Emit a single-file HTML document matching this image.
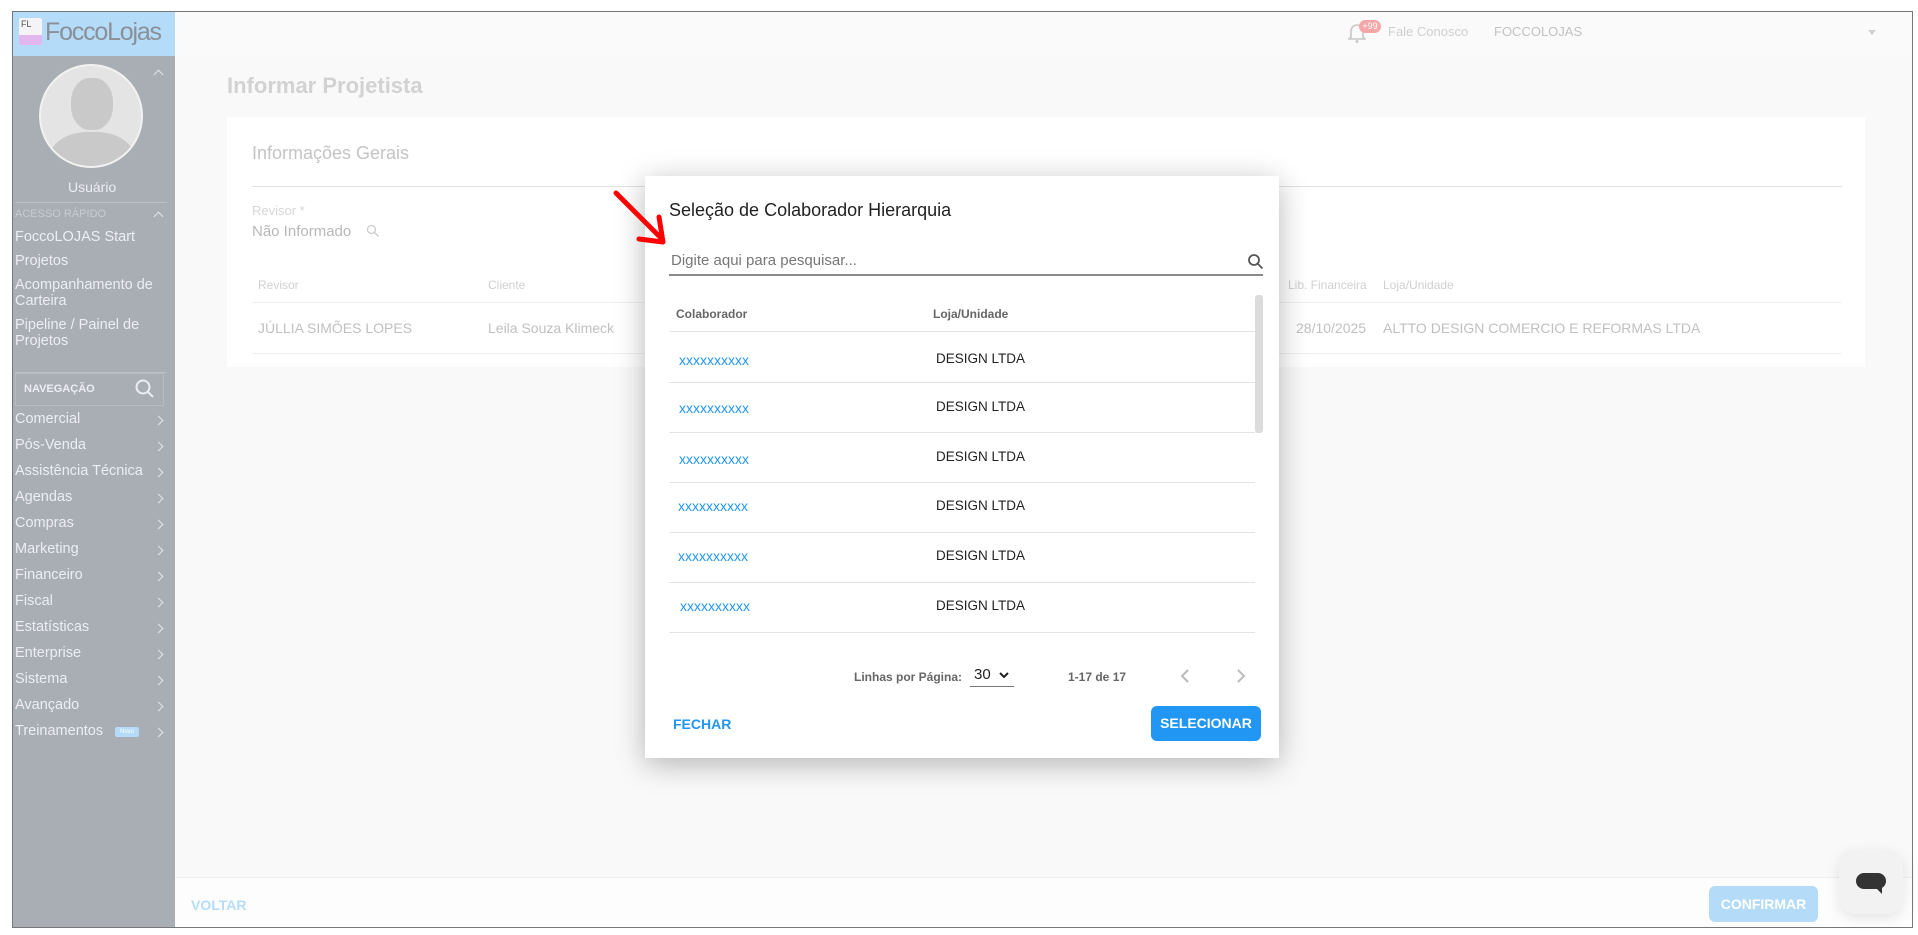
<!DOCTYPE html>
<html><head><meta charset="utf-8"><style>
*{margin:0;padding:0;box-sizing:border-box}
body{width:1918px;height:935px;background:#fff;position:relative;overflow:hidden;font-family:"Liberation Sans","DejaVu Sans",sans-serif}
.a{position:absolute;white-space:nowrap}
#frame{position:absolute;left:12px;top:11px;width:1901px;height:917px;border:1px solid #777;background:#f9f9f9;overflow:hidden}
.side{color:#eceef2;font-size:14.5px}
.chev{position:absolute;left:155px;width:7px;height:7px;border-right:1.5px solid #e4e6ea;border-top:1.5px solid #e4e6ea;transform:rotate(45deg)}
.row{position:absolute;left:669px;width:586px;height:1px;background:#e3e3e3}
.x{color:#2196f3;font-size:14px;text-decoration:none}
.d{color:#222;font-size:13.5px}
</style></head><body>
<div id="frame"></div>
<!-- sidebar -->
<div class="a" style="left:13px;top:12px;width:162px;height:44px;background:#b4dcf9"></div>
<div class="a" style="left:19px;top:18px;width:23px;height:27px;background:#f4f4f6;border-radius:2px"></div>
<div class="a" style="left:19px;top:35px;width:23px;height:10px;background:#e2b6ef;border-radius:0 0 2px 2px"></div>
<div class="a" style="left:21px;top:19px;font-size:9px;color:#555">FL</div>
<div class="a" style="left:45px;top:18px;font-size:25px;color:#8a8f98;letter-spacing:-1.2px">FoccoLojas</div>
<div class="a" style="left:13px;top:56px;width:162px;height:871px;background:#a9adb4"></div>
<div class="a" style="left:39px;top:64px;width:104px;height:104px;border-radius:50%;background:#e4e4e4;border:2px solid #f2f2f2;overflow:hidden">
<div style="position:absolute;left:30px;top:12px;width:42px;height:52px;border-radius:45%;background:#c9c9c9"></div>
<div style="position:absolute;left:8px;top:66px;width:86px;height:60px;border-radius:45% 45% 0 0;background:#c9c9c9"></div>
</div>
<div class="chev" style="top:71px;transform:rotate(-45deg)"></div>
<div class="a side" style="left:68px;top:179px;font-size:14px">Usuário</div>
<div class="a" style="left:15px;top:202px;width:152px;height:1px;background:#bcc0c6"></div>
<div class="a side" style="left:15px;top:208px;font-size:11px;color:#c8cbd0">ACESSO RÁPIDO</div>
<div class="chev" style="top:213px;transform:rotate(-45deg)"></div>
<div class="a side" style="left:15px;top:229px">FoccoLOJAS Start</div>
<div class="a side" style="left:15px;top:253px">Projetos</div>
<div class="a side" style="left:15px;top:277px;line-height:16px">Acompanhamento de<br>Carteira</div>
<div class="a side" style="left:15px;top:317px;line-height:16px">Pipeline / Painel de<br>Projetos</div>
<div class="a" style="left:15px;top:372px;width:152px;height:1px;background:#bcc0c6"></div>
<div class="a" style="left:15px;top:373px;width:149px;height:33px;border:1px solid #b8bcc2"></div>
<div class="a side" style="left:24px;top:383px;font-size:11px;font-weight:bold">NAVEGAÇÃO</div>
<svg class="a" style="left:134px;top:378px" width="22" height="22" viewBox="0 0 22 22"><circle cx="9" cy="9" r="6.5" fill="none" stroke="#eceef2" stroke-width="2"/><path d="M14 14l5 5" stroke="#eceef2" stroke-width="2"/></svg>
<div class="a side" style="left:15px;top:411px">Comercial</div><div class="chev" style="top:417px"></div>
<div class="a side" style="left:15px;top:437px">Pós-Venda</div><div class="chev" style="top:443px"></div>
<div class="a side" style="left:15px;top:463px">Assistência Técnica</div><div class="chev" style="top:469px"></div>
<div class="a side" style="left:15px;top:489px">Agendas</div><div class="chev" style="top:495px"></div>
<div class="a side" style="left:15px;top:515px">Compras</div><div class="chev" style="top:521px"></div>
<div class="a side" style="left:15px;top:541px">Marketing</div><div class="chev" style="top:547px"></div>
<div class="a side" style="left:15px;top:567px">Financeiro</div><div class="chev" style="top:573px"></div>
<div class="a side" style="left:15px;top:593px">Fiscal</div><div class="chev" style="top:599px"></div>
<div class="a side" style="left:15px;top:619px">Estatísticas</div><div class="chev" style="top:625px"></div>
<div class="a side" style="left:15px;top:645px">Enterprise</div><div class="chev" style="top:651px"></div>
<div class="a side" style="left:15px;top:671px">Sistema</div><div class="chev" style="top:677px"></div>
<div class="a side" style="left:15px;top:697px">Avançado</div><div class="chev" style="top:703px"></div>
<div class="a side" style="left:15px;top:723px">Treinamentos</div><div class="a" style="left:115px;top:727px;width:24px;height:10px;background:#b4dcf9;border-radius:2px;font-size:6px;color:#fff;text-align:center;line-height:10px">Novo</div><div class="chev" style="top:729px"></div>
<!-- header -->
<div class="a" style="left:175px;top:12px;width:1737px;height:44px;background:#fafafa"></div>
<svg class="a" style="left:1348px;top:22px" width="18" height="22" viewBox="0 0 18 22"><path d="M3 15V9a6 6 0 0112 0v6l2 2H1z" fill="none" stroke="#c8c8c8" stroke-width="1.6"/><circle cx="9" cy="19.5" r="1.5" fill="#c8c8c8"/></svg>
<div class="a" style="left:1359px;top:20px;width:22px;height:13px;border-radius:7px;background:#f5a6a6;color:#fff;font-size:9px;text-align:center;line-height:13px">+99</div>
<div class="a" style="left:1388px;top:24px;font-size:13px;color:#cfcfcf">Fale Conosco</div>
<div class="a" style="left:1494px;top:24px;font-size:13px;color:#c2c2c2">FOCCOLOJAS</div>
<div class="a" style="left:1868px;top:30px;border-left:4px solid transparent;border-right:4px solid transparent;border-top:5px solid #d0d0d0"></div>
<!-- page -->
<div class="a" style="left:227px;top:73px;font-size:22px;color:#d2d2d2;font-weight:bold">Informar Projetista</div>
<div class="a" style="left:227px;top:117px;width:1638px;height:250px;background:#fff"></div>
<div class="a" style="left:252px;top:143px;font-size:18px;color:#c4c4c4">Informações Gerais</div>
<div class="a" style="left:252px;top:186px;width:1590px;height:1px;background:#e2e2e2"></div>
<div class="a" style="left:252px;top:203px;font-size:13px;color:#d6d6d6">Revisor *</div>
<div class="a" style="left:252px;top:223px;font-size:15px;color:#b8b8b8">Não Informado</div>
<svg class="a" style="left:366px;top:224px" width="14" height="14" viewBox="0 0 14 14"><circle cx="5.5" cy="5.5" r="4" fill="none" stroke="#ccc" stroke-width="1.3"/><path d="M8.5 8.5l4 4" stroke="#ccc" stroke-width="1.3"/></svg>
<div class="a" style="left:258px;top:278px;font-size:12px;color:#d0d0d0">Revisor</div>
<div class="a" style="left:488px;top:278px;font-size:12px;color:#d0d0d0">Cliente</div>
<div class="a" style="left:1288px;top:278px;font-size:12px;color:#d0d0d0">Lib. Financeira</div>
<div class="a" style="left:1383px;top:278px;font-size:12px;color:#d0d0d0">Loja/Unidade</div>
<div class="a" style="left:252px;top:302px;width:1590px;height:1px;background:#f0f0f0"></div>
<div class="a" style="left:258px;top:320px;font-size:14px;color:#c0c0c0">JÚLLIA SIMÕES LOPES</div>
<div class="a" style="left:488px;top:320px;font-size:14px;color:#c0c0c0">Leila Souza Klimeck</div>
<div class="a" style="left:1296px;top:320px;font-size:14px;color:#c0c0c0">28/10/2025</div>
<div class="a" style="left:1383px;top:320px;font-size:14px;color:#c0c0c0">ALTTO DESIGN COMERCIO E REFORMAS LTDA</div>
<div class="a" style="left:252px;top:353px;width:1590px;height:1px;background:#f0f0f0"></div>
<!-- footer -->
<div class="a" style="left:175px;top:877px;width:1737px;height:50px;background:#fdfdfd;border-top:1px solid #eee"></div>
<div class="a" style="left:191px;top:897px;font-size:14px;font-weight:bold;color:#b6dcf8">VOLTAR</div>
<div class="a" style="left:1709px;top:886px;width:109px;height:36px;border-radius:6px;background:#b4dcf9;color:#fff;font-size:14px;font-weight:bold;text-align:center;line-height:36px">CONFIRMAR</div>
<div class="a" style="left:1839px;top:850px;width:64px;height:64px;border-radius:16px;background:#f2f2f2;box-shadow:0 4px 14px rgba(0,0,0,.1)"></div>
<div class="a" style="left:1856px;top:873px;width:30px;height:16px;border-radius:8px;background:#333"></div>
<div class="a" style="left:1876px;top:888px;border-left:6px solid transparent;border-top:6px solid #333"></div>
<!-- modal -->
<div class="a" style="left:645px;top:176px;width:634px;height:582px;background:#fff;box-shadow:0 6px 28px rgba(0,0,0,.28)"></div>
<div class="a" style="left:669px;top:200px;font-size:18px;color:#222">Seleção de Colaborador Hierarquia</div>
<div class="a" style="left:671px;top:252px;font-size:15px;color:#777">Digite aqui para pesquisar...</div>
<svg class="a" style="left:1247px;top:253px" width="17" height="17" viewBox="0 0 17 17"><circle cx="7" cy="7" r="5" fill="none" stroke="#555" stroke-width="1.8"/><path d="M10.5 10.5l5 5" stroke="#555" stroke-width="1.8"/></svg>
<div class="a" style="left:669px;top:274px;width:594px;height:2px;background:#8a8a8a"></div>
<div class="a" style="left:1255px;top:295px;width:8px;height:138px;border-radius:3px;background:#dcdcdc"></div>
<div class="a" style="left:676px;top:307px;font-size:12px;font-weight:bold;color:#666">Colaborador</div>
<div class="a" style="left:933px;top:307px;font-size:12px;font-weight:bold;color:#666">Loja/Unidade</div>
<div class="row" style="top:331px"></div>
<div class="a x" style="left:679px;top:352px">xxxxxxxxxx</div><div class="a d" style="left:936px;top:351px">DESIGN LTDA</div>
<div class="row" style="top:382px"></div>
<div class="a x" style="left:679px;top:400px">xxxxxxxxxx</div><div class="a d" style="left:936px;top:399px">DESIGN LTDA</div>
<div class="row" style="top:432px"></div>
<div class="a x" style="left:679px;top:451px">xxxxxxxxxx</div><div class="a d" style="left:936px;top:449px">DESIGN LTDA</div>
<div class="row" style="top:482px"></div>
<div class="a x" style="left:678px;top:498px">xxxxxxxxxx</div><div class="a d" style="left:936px;top:498px">DESIGN LTDA</div>
<div class="row" style="top:532px"></div>
<div class="a x" style="left:678px;top:548px">xxxxxxxxxx</div><div class="a d" style="left:936px;top:548px">DESIGN LTDA</div>
<div class="row" style="top:582px"></div>
<div class="a x" style="left:680px;top:598px">xxxxxxxxxx</div><div class="a d" style="left:936px;top:598px">DESIGN LTDA</div>
<div class="row" style="top:632px"></div>
<div class="a" style="left:854px;top:670px;font-size:12px;font-weight:bold;color:#666">Linhas por Página:</div>
<div class="a" style="left:974px;top:666px;font-size:15px;color:#222">30</div>
<svg class="a" style="left:998px;top:671px" width="12" height="8" viewBox="0 0 12 8"><path d="M2 2l4 4 4-4" fill="none" stroke="#222" stroke-width="2"/></svg>
<div class="a" style="left:970px;top:686px;width:44px;height:1px;background:#777"></div>
<div class="a" style="left:1068px;top:670px;font-size:12px;font-weight:bold;color:#666">1-17 de 17</div>
<svg class="a" style="left:1180px;top:668px" width="10" height="16" viewBox="0 0 10 16"><path d="M8 2L2 8l6 6" fill="none" stroke="#bbb" stroke-width="2"/></svg>
<svg class="a" style="left:1236px;top:668px" width="10" height="16" viewBox="0 0 10 16"><path d="M2 2l6 6-6 6" fill="none" stroke="#bbb" stroke-width="2"/></svg>
<div class="a" style="left:673px;top:716px;font-size:14px;font-weight:bold;color:#2196f3">FECHAR</div>
<div class="a" style="left:1151px;top:706px;width:110px;height:35px;border-radius:6px;background:#2196f3;color:#fff;font-size:14px;font-weight:bold;text-align:center;line-height:35px">SELECIONAR</div>
<!-- red arrow -->
<svg class="a" style="left:605px;top:185px" width="70" height="70" viewBox="0 0 70 70"><path d="M11 8L55 52" stroke="#f00" stroke-width="5" stroke-linecap="round"/><path d="M34 54L58 57L54 32" fill="none" stroke="#f00" stroke-width="5" stroke-linecap="round" stroke-linejoin="round"/></svg>
</body></html>
